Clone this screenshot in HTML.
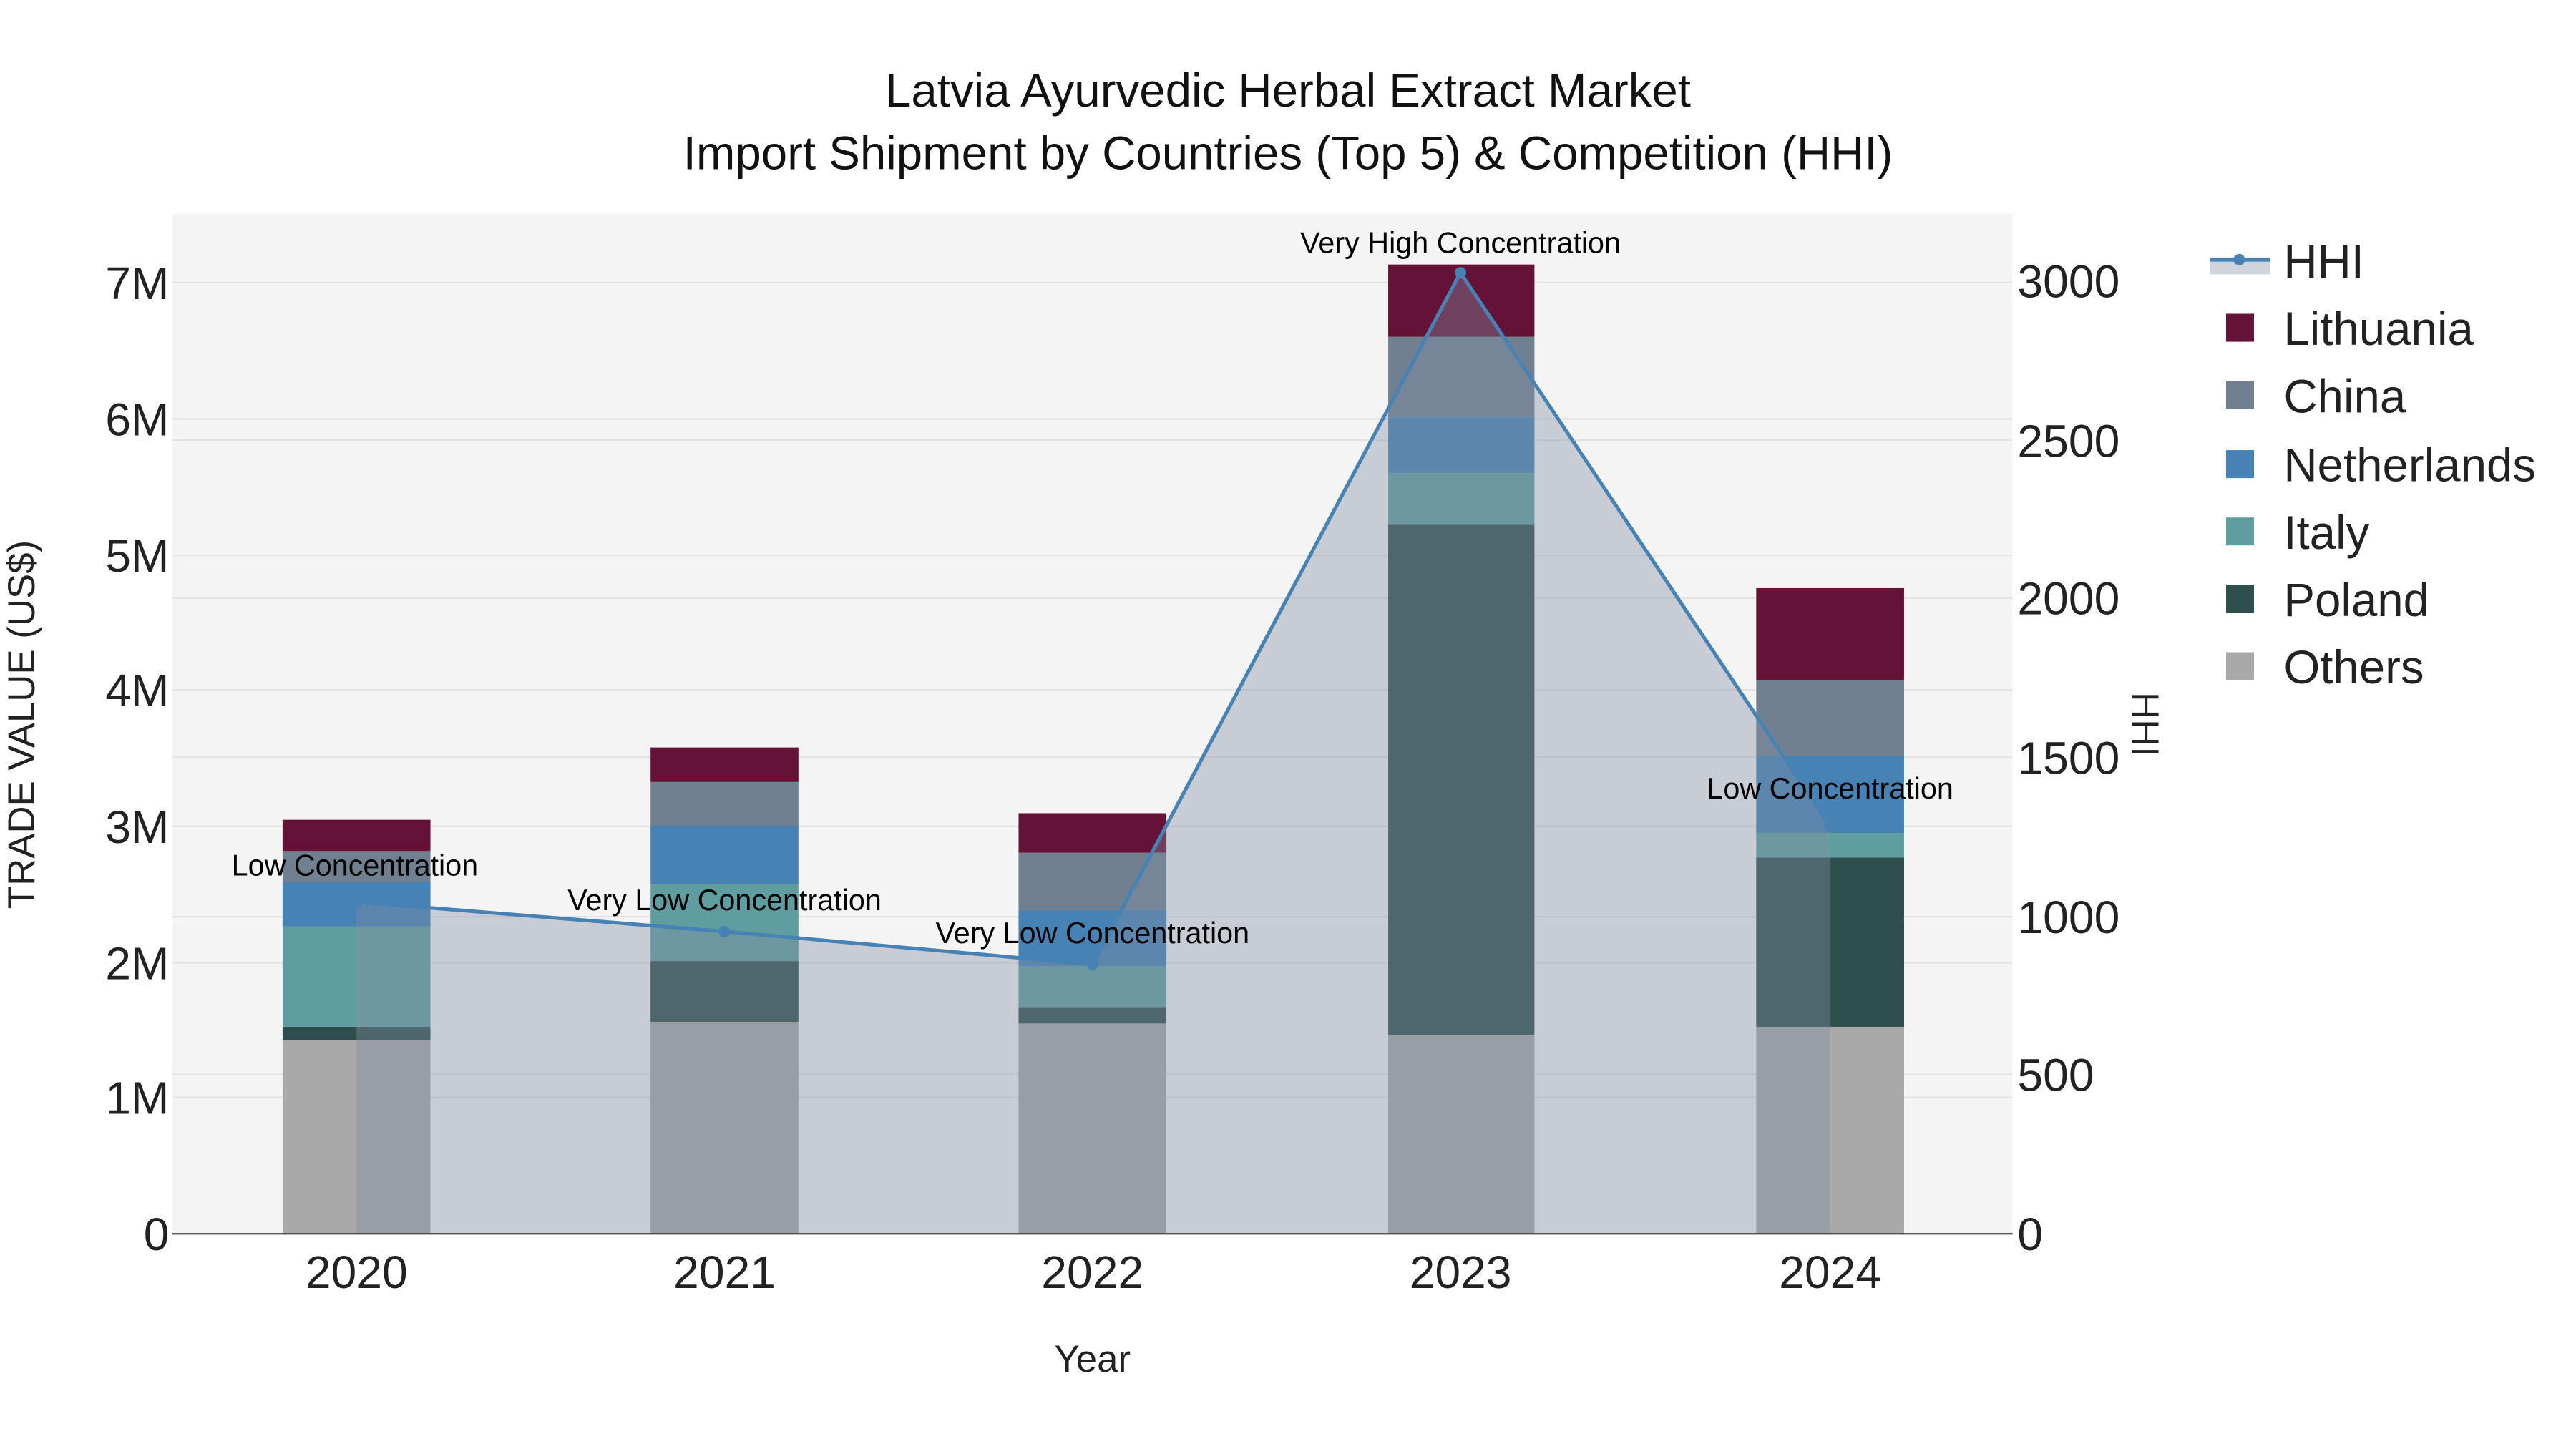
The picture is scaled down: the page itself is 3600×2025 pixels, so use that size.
<!DOCTYPE html>
<html><head><meta charset="utf-8"><style>html,body{margin:0;padding:0;background:#fff}svg{display:block}text{font-family:"Liberation Sans",sans-serif}</style></head><body>
<svg width="3600" height="2025" viewBox="0 0 1568 882" preserveAspectRatio="none" xmlns="http://www.w3.org/2000/svg">
<rect width="1568" height="882" fill="#fff"/>
<rect x="105" y="130" width="1120" height="621" fill="#f4f4f4"/>
<g stroke="#e2e2e2" stroke-width="1">
<line x1="105" x2="1225" y1="668" y2="668"/><line x1="105" x2="1225" y1="586" y2="586"/><line x1="105" x2="1225" y1="503" y2="503"/><line x1="105" x2="1225" y1="420" y2="420"/><line x1="105" x2="1225" y1="338" y2="338"/><line x1="105" x2="1225" y1="255" y2="255"/><line x1="105" x2="1225" y1="172" y2="172"/>
<line x1="105" x2="1225" y1="654" y2="654"/><line x1="105" x2="1225" y1="558" y2="558"/><line x1="105" x2="1225" y1="461" y2="461"/><line x1="105" x2="1225" y1="364" y2="364"/><line x1="105" x2="1225" y1="268" y2="268"/>
</g>
<g>
<rect x="172" y="633" width="90" height="118" fill="#a9a9a9"/><rect x="172" y="625" width="90" height="8" fill="#2f4f4f"/><rect x="172" y="564" width="90" height="61" fill="#5f9ea0"/><rect x="172" y="537" width="90" height="27" fill="#4682b4"/><rect x="172" y="518" width="90" height="19" fill="#708090"/><rect x="172" y="499" width="90" height="19" fill="#641235"/>
<rect x="396" y="622" width="90" height="129" fill="#a9a9a9"/><rect x="396" y="585" width="90" height="37" fill="#2f4f4f"/><rect x="396" y="538" width="90" height="47" fill="#5f9ea0"/><rect x="396" y="503" width="90" height="35" fill="#4682b4"/><rect x="396" y="476" width="90" height="27" fill="#708090"/><rect x="396" y="455" width="90" height="21" fill="#641235"/>
<rect x="620" y="623" width="90" height="128" fill="#a9a9a9"/><rect x="620" y="613" width="90" height="10" fill="#2f4f4f"/><rect x="620" y="588" width="90" height="25" fill="#5f9ea0"/><rect x="620" y="554" width="90" height="34" fill="#4682b4"/><rect x="620" y="519" width="90" height="35" fill="#708090"/><rect x="620" y="495" width="90" height="24" fill="#641235"/>
<rect x="845" y="630" width="89" height="121" fill="#a9a9a9"/><rect x="845" y="319" width="89" height="311" fill="#2f4f4f"/><rect x="845" y="288" width="89" height="31" fill="#5f9ea0"/><rect x="845" y="254" width="89" height="34" fill="#4682b4"/><rect x="845" y="205" width="89" height="49" fill="#708090"/><rect x="845" y="161" width="89" height="44" fill="#641235"/>
<rect x="1069" y="625" width="90" height="126" fill="#a9a9a9"/><rect x="1069" y="522" width="90" height="103" fill="#2f4f4f"/><rect x="1069" y="507" width="90" height="15" fill="#5f9ea0"/><rect x="1069" y="460" width="90" height="47" fill="#4682b4"/><rect x="1069" y="414" width="90" height="46" fill="#708090"/><rect x="1069" y="358" width="90" height="56" fill="#641235"/>
</g>
<path d="M217,549 L441,567 L665,587 L889,166 L1114,503 L1114,751 L217,751 Z" fill="rgb(130,142,162)" fill-opacity="0.38"/>
<path d="M217,549 L441,567 L665,587 L889,166 L1114,503" fill="none" stroke="#4682b4" stroke-width="2.2"/>
<g fill="#4682b4"><circle cx="217" cy="549" r="3.5"/><circle cx="441" cy="567" r="3.5"/><circle cx="665" cy="587" r="3.5"/><circle cx="889" cy="166" r="3.5"/><circle cx="1114" cy="503" r="3.5"/></g>
<line x1="105" x2="1225" y1="751" y2="751" stroke="#444" stroke-width="1"/>
<g font-size="18" fill="#000" text-anchor="middle">
<text x="216" y="533">Low Concentration</text><text x="441" y="554">Very Low Concentration</text><text x="665" y="574">Very Low Concentration</text><text x="889" y="154">Very High Concentration</text><text x="1114" y="486">Low Concentration</text>
</g>
<g font-size="28" fill="#222" text-anchor="end">
<text x="103" y="761">0</text><text x="103" y="678">1M</text><text x="103" y="596">2M</text><text x="103" y="513">3M</text><text x="103" y="430">4M</text><text x="103" y="348">5M</text><text x="103" y="265">6M</text><text x="103" y="182">7M</text>
</g>
<g font-size="28" fill="#222">
<text x="1228" y="761">0</text><text x="1228" y="664">500</text><text x="1228" y="568">1000</text><text x="1228" y="471">1500</text><text x="1228" y="374">2000</text><text x="1228" y="278">2500</text><text x="1228" y="181">3000</text>
</g>
<g font-size="28" fill="#222" text-anchor="middle">
<text x="217" y="784">2020</text><text x="441" y="784">2021</text><text x="665" y="784">2022</text><text x="889" y="784">2023</text><text x="1114" y="784">2024</text>
</g>
<text x="665" y="835" font-size="23" fill="#222" text-anchor="middle">Year</text>
<text transform="translate(21,441) rotate(-90)" font-size="23" fill="#222" text-anchor="middle">TRADE VALUE (US$)</text>
<text transform="translate(1298,441) rotate(90)" font-size="23" fill="#222" text-anchor="middle">HHI</text>
<g font-size="28.5" fill="#111" text-anchor="middle">
<text x="784" y="65">Latvia Ayurvedic Herbal Extract Market</text>
<text x="784" y="103">Import Shipment by Countries (Top 5) &amp; Competition (HHI)</text>
</g>
<g>
<rect x="1345" y="158" width="37" height="9" fill="rgb(130,142,162)" fill-opacity="0.38"/>
<line x1="1345" x2="1382" y1="158" y2="158" stroke="#4682b4" stroke-width="2.5"/><circle cx="1363" cy="158" r="3.5" fill="#4682b4"/>
<rect x="1355" y="191" width="17" height="17" fill="#641235"/>
<rect x="1355" y="232" width="17" height="17" fill="#708090"/>
<rect x="1355" y="274" width="17" height="17" fill="#4682b4"/>
<rect x="1355" y="315" width="17" height="17" fill="#5f9ea0"/>
<rect x="1355" y="356" width="17" height="17" fill="#2f4f4f"/>
<rect x="1355" y="397" width="17" height="17" fill="#a9a9a9"/>
</g>
<g font-size="28.5" fill="#222">
<text x="1390" y="169">HHI</text><text x="1390" y="210">Lithuania</text><text x="1390" y="251">China</text><text x="1390" y="293">Netherlands</text><text x="1390" y="334">Italy</text><text x="1390" y="375">Poland</text><text x="1390" y="416">Others</text>
</g>
</svg>
</body></html>
